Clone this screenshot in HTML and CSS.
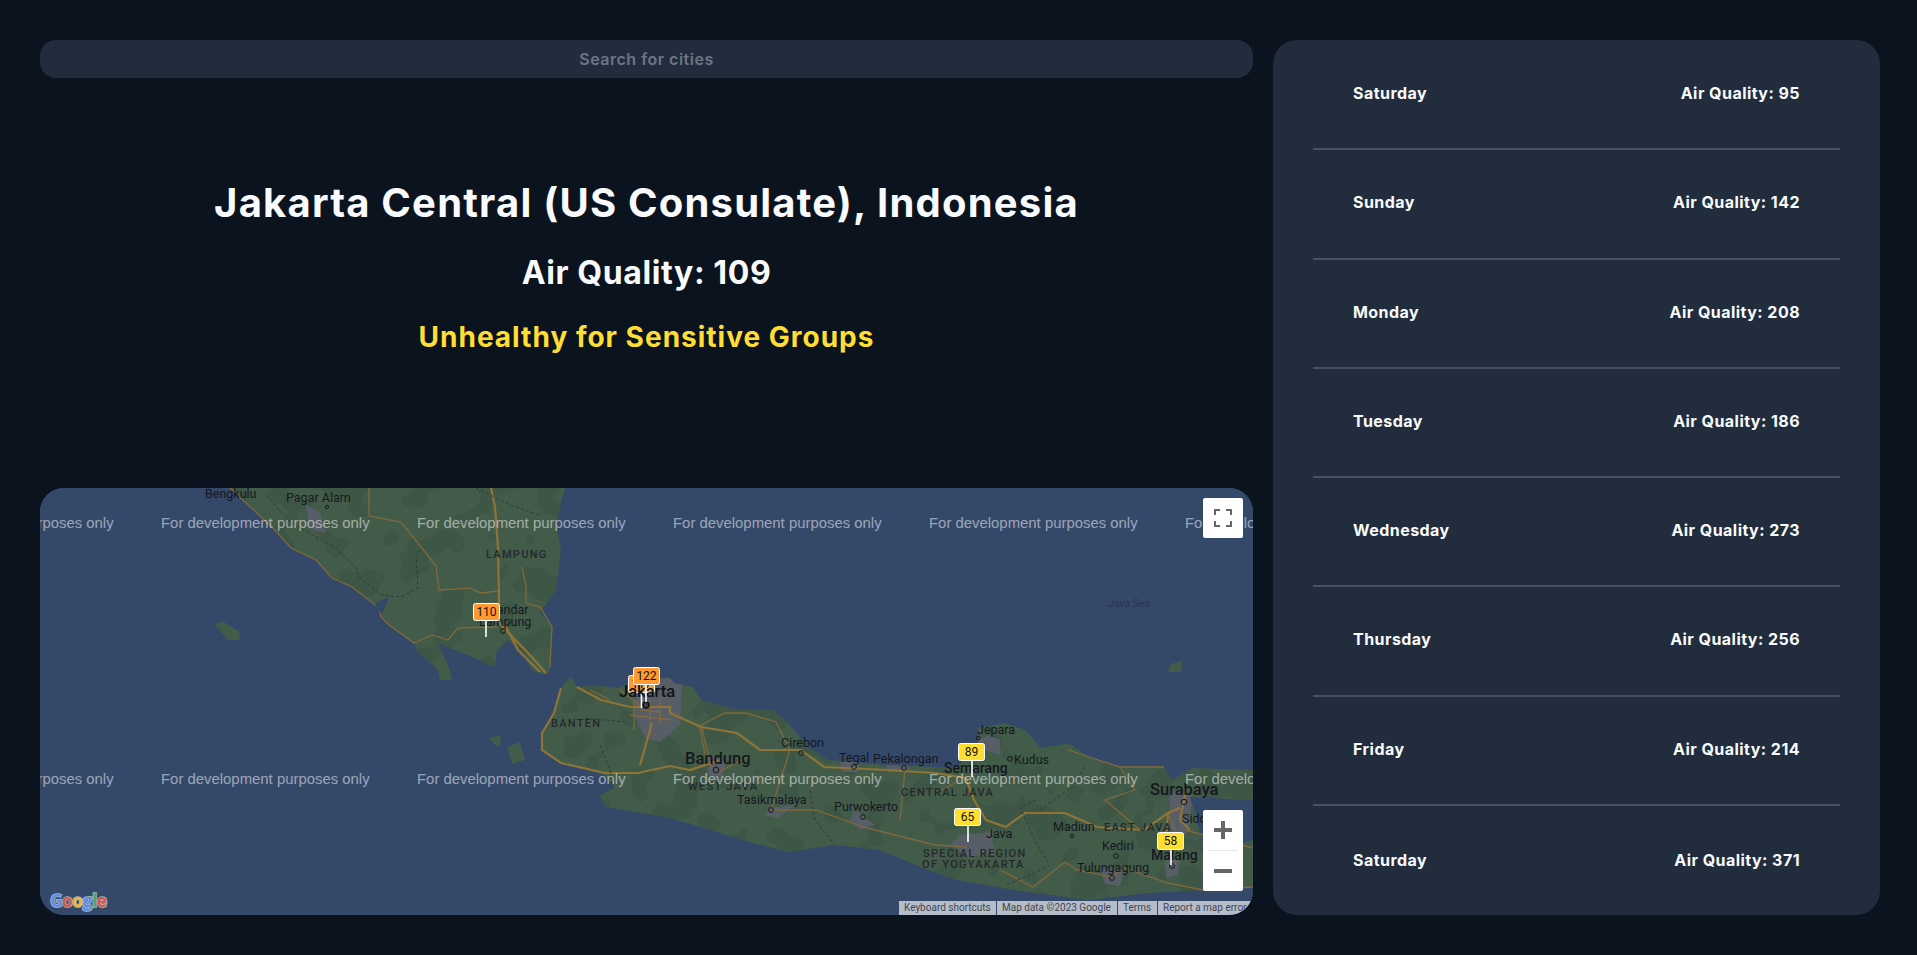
FILE: index.html
```html
<!DOCTYPE html>
<html lang="en">
<head>
<meta charset="utf-8">
<title>Air Quality</title>
<link rel="stylesheet" href="styles.css">
</head>
<body>
<main class="page">
  <section class="left">
    <input class="search" type="text" placeholder="Search for cities">
    <div class="info">
      <h1 class="city">Jakarta Central (US Consulate), Indonesia</h1>
      <h2 class="aqi">Air Quality: 109</h2>
      <h3 class="level">Unhealthy for Sensitive Groups</h3>
    </div>
    <div class="map">
      <svg class="map-svg" viewBox="40 488 1213 427" xmlns="http://www.w3.org/2000/svg">
        <defs>
          <clipPath id="land">
            <path d="M230 488 L275 530 291 548 316 560 332 578 352 587 365 597 379 608 381 617 389 625 414 643 418 652 438 670 440 680 452 680 450 670 438 643 479 660 495 667 497 650 508 640 522 653 532 670 545 675 550 670 552 627 540 613 556 590 561 550 556 523 565 488Z"/>
            <path d="M214 624 L224 622 240 632 239 640 228 640Z"/>
            <path d="M571 677 L577 687 593 685 618 688 634 680 670 678 674 683 693 687 701 700 737 710 773 710 788 723 808 747 828 760 887 765 935 767 958 767 978 743 978 728 1006 723 1025 730 1041 748 1069 743 1089 757 1120 767 1164 767 1172 780 1192 768 1253 770 1253 800 1190 797 1196 815 1200 835 1235 845 1253 840 1253 887 1203 890 1148 893 1089 900 1013 890 957 880 923 868 880 850 835 845 788 852 753 843 701 827 670 818 635 812 605 807 600 795 614 788 605 775 561 763 542 750 542 733 554 713 561 688Z"/>
            <path d="M489 738 L501 735 500 747 495 745Z M507 747 L520 742 525 760 512 764Z"/>
            <path d="M1168 672 L1171 664 1182 661 1182 670 1180 672Z"/>
          </clipPath>
          <filter id="terrain" x="0" y="0" width="100%" height="100%" color-interpolation-filters="sRGB">
            <feTurbulence type="fractalNoise" baseFrequency="0.03" numOctaves="2" seed="7"/>
            <feColorMatrix values="0 0 0 0 0.243  0 0 0 0 0.337  0 0 0 0 0.271  4 0 0 0 -1.9"/>
            <feComponentTransfer>
              <feFuncA type="discrete" tableValues="0 1 1"/>
            </feComponentTransfer>
          </filter>
        </defs>

        <rect class="sea" x="40" y="488" width="1213" height="427"/>
        <g clip-path="url(#land)">
          <rect class="land" x="40" y="488" width="1213" height="427"/>
          <rect x="40" y="488" width="1213" height="427" filter="url(#terrain)"/>
          <path class="urban" d="M636 680 L660 672 682 680 680 725 660 742 645 738 634 715Z"/>
          <path class="urban" d="M710 755 L726 762 722 778 708 775Z M795 805 L770 808 765 815 778 818Z M855 810 L875 825 860 830 850 820Z M960 835 L990 832 995 852 968 858 950 845Z M970 745 L1000 755 1000 740 988 735Z M1170 790 L1192 795 1190 825 1180 845 1170 835Z M1165 860 L1180 860 1178 875 1166 878Z M1100 868 L1125 870 1120 886 1105 884Z M840 762 L860 762 858 772 842 772Z M885 762 L910 762 908 772 888 772Z"/>
          <path class="urban" d="M306 505 L320 512 326 533 314 530 308 518Z"/>
          <path class="water" d="M376 603 L389 597 382 615 375 612Z"/>
        </g>

        <g class="roads">
          <path d="M230 488 L275 530 291 548 316 560 332 578 352 587 365 597 379 608 381 617 389 625 414 643 432 635 448 640 458 628 497 627"/>
          <path d="M369 488 L369 516 401 522 422 548 436 566 439 590 469 588 481 593 498 591"/>
          <path d="M522 567 L526 587 526 603 540 607 552 627 550 667"/>
          <path d="M1068 750 L1089 757 1120 767 1164 767"/>
          <path d="M712 770 L701 725 725 713 745 713 776 722 790 750"/>
          <path d="M706 760 L700 728 M748 757 L716 773"/>
          <path d="M771 810 L816 810 863 827 895 835 935 845 966 847"/>
          <path d="M1000 870 L1033 887 1065 862 1077 870 1112 877 1124 868 1168 883 1203 890 1253 887"/>
          <path d="M1185 830 L1253 848"/>
          <path d="M620 690 L640 705 M640 710 L660 712 M630 715 L672 720 M634 700 L634 730 M650 700 L650 735 M660 700 L660 725"/>
          <path d="M590 690 L610 700"/>
          <path d="M790 750 L771 810 M1120 767 L1135 790 1105 800 1140 830 M1168 813 L1180 845 1175 865 M905 770 L900 820 M960 780 L942 790"/>
        </g>
        <g class="roads-major">
          <path d="M491 488 L495 507 498 547 499 597 499 623 528 653 546 673"/>
          <path d="M505 625 L518 650 540 672"/>
          <path d="M577 687 L601 700 630 707 670 707 670 713 701 727 737 733 760 750 801 750 824 767 887 770 935 773 966 778 974 800 986 820 1006 827 1025 813 1065 813 1097 827 1144 830 1168 813 1180 808"/>
          <path d="M1180 808 L1168 813 1165 850 M1186 790 L1180 820 1190 830"/>
          <path d="M652 723 L640 765"/>
          <path d="M561 688 L554 713 542 733 542 750 561 763 605 773 638 773 670 766 690 770 720 760"/>
        </g>
        <g class="borders">
          <path d="M266 495 L291 523 336 548 356 568 360 578 381 595 401 597 418 588 416 555 422 548"/>
          <path d="M476 488 L510 505 540 515"/>
          <path d="M600 745 L610 770 612 788 M585 718 L625 722"/>
          <path d="M1036 800 L1020 808 1040 850 1050 865 1030 875 1005 885 M1040 810 L1075 785 1085 765 M810 790 L815 820 835 845"/>
        </g>
        <path class="lake" d="M376 603 L389 597 382 612 375 611Z"/>

        <g class="labels">
          <text class="lbl" x="205" y="498">Bengkulu</text>
          <text class="lbl" x="286" y="502">Pagar Alam</text>
          <text class="lbl-region" x="486" y="558">LAMPUNG</text>
          <text class="lbl" x="489" y="614">Bandar</text>
          <text class="lbl" x="479" y="626">Lampung</text>
          <text class="lbl-region" x="551" y="727">BANTEN</text>
          <text class="lbl" x="781" y="747">Cirebon</text>
          <text class="lbl" x="839" y="762">Tegal</text>
          <text class="lbl" x="873" y="763">Pekalongan</text>
          <text class="lbl-big" x="685" y="764">Bandung</text>
          <text class="lbl-region" x="688" y="790">WEST JAVA</text>
          <text class="lbl" x="737" y="804">Tasikmalaya</text>
          <text class="lbl" x="834" y="811">Purwokerto</text>
          <text class="lbl" x="977" y="734">Jepara</text>
          <text class="lbl" x="1014" y="764">Kudus</text>
          <text class="lbl-mid" x="944" y="773">Semarang</text>
          <text class="lbl-region" x="901" y="796">CENTRAL JAVA</text>
          <text class="lbl" x="986" y="838">Java</text>
          <text class="lbl-region" x="923" y="857">SPECIAL REGION</text>
          <text class="lbl-region" x="922" y="868">OF YOGYAKARTA</text>
          <text class="lbl" x="1053" y="831">Madiun</text>
          <text class="lbl-region" x="1104" y="831">EAST JAVA</text>
          <text class="lbl" x="1102" y="850">Kediri</text>
          <text class="lbl" x="1077" y="872">Tulungagung</text>
          <text class="lbl-big" x="1150" y="795">Surabaya</text>
          <text class="lbl" x="1182" y="823">Sidoarjo</text>
          <text class="lbl-mid" x="1151" y="860">Malang</text>
          <text class="lbl-sea" x="1108" y="607">Java Sea</text>
        </g>
        <g class="towns">
          <circle cx="327" cy="507" r="1.6"/><circle cx="503" cy="631" r="2.4"/><circle cx="801" cy="753" r="2.4"/>
          <circle cx="854" cy="767" r="2.4"/><circle cx="904" cy="768" r="2.4"/><circle cx="716" cy="770" r="2.8"/>
          <circle cx="1010" cy="759" r="2.4"/><circle cx="771" cy="810" r="2.4"/><circle cx="863" cy="817" r="2.4"/>
          <circle cx="1184" cy="802" r="2.8"/><circle cx="1072" cy="836" r="1.8"/><circle cx="1116" cy="856" r="2.4"/>
          <circle cx="1172" cy="866" r="2.4"/><circle cx="1112" cy="878" r="2.4"/><circle cx="978" cy="738" r="1.8"/>
        </g>

        <g class="pin orange">
          <rect x="628.5" y="675.5" width="26" height="17" rx="2"/><path d="M641.5 692V708"/>
          <text x="641.5" y="688">117</text>
        </g>
        <text class="lbl-big" x="619" y="697">Jakarta</text>
        <circle class="town-big" cx="646" cy="705" r="3"/>
        <g class="pin orange">
          <rect x="473.5" y="603.5" width="26" height="17" rx="2"/><path d="M486 620V637"/>
          <text x="486.5" y="616">110</text>
        </g>
        <g class="pin orange">
          <rect x="633.5" y="667.5" width="26" height="17" rx="2"/><path d="M646 684V702"/>
          <text x="646.5" y="680">122</text>
        </g>
        <g class="pin yellow">
          <rect x="958.5" y="743.5" width="26" height="17" rx="2"/><path d="M972 760V777"/>
          <text x="971.5" y="756">89</text>
        </g>
        <g class="pin yellow">
          <rect x="954.5" y="808.5" width="26" height="17" rx="2"/><path d="M968 825V842"/>
          <text x="967.5" y="821">65</text>
        </g>
        <g class="pin yellow">
          <rect x="1157.5" y="832.5" width="26" height="17" rx="2"/><path d="M1171 849V865"/>
          <text x="1170.5" y="845">58</text>
        </g>

        <g class="watermark">
          <text x="-95" y="528">For development purposes only</text>
          <text x="161" y="528">For development purposes only</text>
          <text x="417" y="528">For development purposes only</text>
          <text x="673" y="528">For development purposes only</text>
          <text x="929" y="528">For development purposes only</text>
          <text x="1185" y="528">For development purposes only</text>
          <text x="-95" y="784">For development purposes only</text>
          <text x="161" y="784">For development purposes only</text>
          <text x="417" y="784">For development purposes only</text>
          <text x="673" y="784">For development purposes only</text>
          <text x="929" y="784">For development purposes only</text>
          <text x="1185" y="784">For development purposes only</text>
        </g>

        <text class="google" x="50" y="907"><tspan class="g-blue">G</tspan><tspan class="g-red">o</tspan><tspan class="g-yellow">o</tspan><tspan class="g-blue">g</tspan><tspan class="g-green">l</tspan><tspan class="g-red">e</tspan></text>
      </svg>

      <button class="ctl ctl-full" type="button" aria-label="Toggle fullscreen view">
        <svg width="18" height="18" viewBox="0 0 18 18"><path class="ctl-icon" d="M1 6V1H6M12 1H17V6M17 12V17H12M6 17H1V12" fill="none" stroke-width="2"/></svg>
      </button>
      <div class="ctl ctl-zoom">
        <button class="zoom-btn" type="button" aria-label="Zoom in">
          <svg width="18" height="18" viewBox="0 0 18 18"><path class="ctl-fill" d="M7 0H11V7H18V11H11V18H7V11H0V7H7Z"/></svg>
        </button>
        <span class="zoom-sep"></span>
        <button class="zoom-btn" type="button" aria-label="Zoom out">
          <svg width="18" height="18" viewBox="0 0 18 18"><path class="ctl-fill" d="M0 7H18V11H0Z"/></svg>
        </button>
      </div>
      <div class="attr">
        <span class="attr-a">Keyboard shortcuts</span>
        <span class="attr-b">Map data ©2023 Google</span>
        <span class="attr-c">Terms</span>
        <span class="attr-d">Report a map error</span>
      </div>
    </div>
  </section>

  <aside class="forecast">
    <div class="row"><span>Saturday</span><span>Air Quality: 95</span></div>
    <div class="row"><span>Sunday</span><span>Air Quality: 142</span></div>
    <div class="row"><span>Monday</span><span>Air Quality: 208</span></div>
    <div class="row"><span>Tuesday</span><span>Air Quality: 186</span></div>
    <div class="row"><span>Wednesday</span><span>Air Quality: 273</span></div>
    <div class="row"><span>Thursday</span><span>Air Quality: 256</span></div>
    <div class="row"><span>Friday</span><span>Air Quality: 214</span></div>
    <div class="row"><span>Saturday</span><span>Air Quality: 371</span></div>
  </aside>
</main>
</body>
</html>
```

FILE: styles.css
```css
* { box-sizing: border-box; }
html, body { margin: 0; height: 100%; }
body {
  background: #0b131f;
  color: #f8fafc;
  font-family: Inter, "Open Sans", sans-serif;
  overflow: hidden;
}
.page {
  display: grid;
  grid-template-columns: 1213px 607px;
  column-gap: 20px;
  height: 955px;
  padding: 40px 37px 40px 40px;
}
.left { display: flex; flex-direction: column; min-width: 0; }
.search {
  height: 38px;
  width: 100%;
  border: 0;
  border-radius: 16px;
  background: #212d3d;
  color: #f8fafc;
  font: 600 16px Inter, sans-serif;
  letter-spacing: 0.5px;
  text-align: center;
  outline: none;
  flex: none;
}
.search::placeholder { color: #6d7684; opacity: 1; }
.info {
  flex: 1;
  text-align: center;
  padding-top: 101px;
}
.city {
  margin: 0;
  font-size: 40px;
  line-height: 48px;
  font-weight: 700;
  letter-spacing: 1.2px;
}
.aqi {
  margin: 26px 0 0;
  font-size: 32px;
  line-height: 40px;
  font-weight: 700;
  letter-spacing: 0.6px;
}
.level {
  margin: 26px 0 0;
  font-size: 28px;
  line-height: 36px;
  font-weight: 700;
  letter-spacing: 1px;
  color: #ffde33;
}
.map {
  position: relative;
  flex: none;
  height: 427px;
  border-radius: 24px;
  overflow: hidden;
  background: #34486a;
}
.map-svg { display: block; width: 1213px; height: 427px; }
.sea { fill: #34486a; }
.land { fill: #435c4a; }
.urban { fill: #585e68; }
.water, .lake { fill: #34486a; }
.roads path { fill: none; stroke: #80693a; stroke-width: 1.3; }
.roads-major path { fill: none; stroke: #8f7436; stroke-width: 2.2; }
.borders path { fill: none; stroke: #2f3a37; stroke-width: 1; stroke-dasharray: 3 2.5; }
.labels text { font-family: Roboto, sans-serif; fill: #14181d; }
.lbl { font-size: 12.5px; }
.lbl-mid { font-size: 14px; font-weight: 500; }
.lbl-big { font-family: Roboto, sans-serif; font-size: 16.5px; font-weight: 500; fill: #0f1317; }
.lbl-region { font-size: 11px; font-weight: 500; letter-spacing: 1.3px; fill: #23282c !important; }
.lbl-sea { font-size: 10.5px; fill: #28344a !important; }
.towns circle { fill: none; stroke: #15191d; stroke-width: 1; }
.town-big { fill: #3a3f46; stroke: #0f1317; stroke-width: 1.5; }
.pin rect { stroke: #fff; stroke-width: 1; }
.pin path { stroke: #fff; stroke-width: 1.6; fill: none; }
.pin text {
  font-family: Roboto, sans-serif;
  font-size: 12px;
  fill: #14110a;
  text-anchor: middle;
}
.orange rect { fill: #ff9a33; }
.yellow rect { fill: #ffde33; }
.watermark text {
  font-family: "Liberation Sans", Arial, sans-serif;
  font-size: 14.9px;
  fill: rgba(255, 255, 255, 0.52);
}
.google {
  font-family: "Open Sans", sans-serif;
  font-size: 17.5px;
  font-weight: 700;
  letter-spacing: -0.6px;
  stroke: #aab2be;
  stroke-width: 1.6px;
  paint-order: stroke;
}
.g-blue { fill: #5b8fe8; }
.g-red { fill: #d9574a; }
.g-yellow { fill: #eab730; }
.g-green { fill: #4fa565; }
.ctl {
  position: absolute;
  right: 10px;
  background: #fff;
  border: 0;
  padding: 0;
  border-radius: 2px;
}
.ctl-full {
  top: 10px;
  width: 40px;
  height: 40px;
  display: flex;
  align-items: center;
  justify-content: center;
}
.ctl-icon { stroke: #666; }
.ctl-fill { fill: #666; }
.ctl-zoom {
  bottom: 24px;
  width: 40px;
  height: 81px;
  display: flex;
  flex-direction: column;
  align-items: center;
}
.zoom-btn {
  width: 40px;
  height: 40px;
  border: 0;
  padding: 0;
  background: none;
  display: flex;
  align-items: center;
  justify-content: center;
}
.zoom-sep { width: 30px; height: 1px; background: #e6e6e6; flex: none; }
.attr {
  position: absolute;
  left: 859px;
  right: 0;
  bottom: 0;
  height: 14px;
  display: flex;
  font: 10px/14px Roboto, sans-serif;
  color: #3f4650;
  white-space: nowrap;
  overflow: hidden;
}
.attr span {
  background: #b6bdca;
  padding-left: 5px;
  margin-right: 1px;
  flex: none;
}
.attr-a { width: 97px; }
.attr-b { width: 120px; }
.attr-c { width: 39px; }
.attr-d { width: 100px; margin-right: 0 !important; }
.forecast {
  display: grid;
  grid-template-rows: repeat(8, 1fr);
  background: #212d3d;
  border-radius: 24px;
  padding: 1px 40px 0;
  height: 875px;
}
.row {
  display: flex;
  justify-content: space-between;
  align-items: center;
  padding: 0 40px 3px;
  border-bottom: 2px solid #475261;
  font-size: 16px;
  font-weight: 700;
  letter-spacing: 0.45px;
}
.row:last-child { border-bottom: 0; padding-bottom: 0; }
```
